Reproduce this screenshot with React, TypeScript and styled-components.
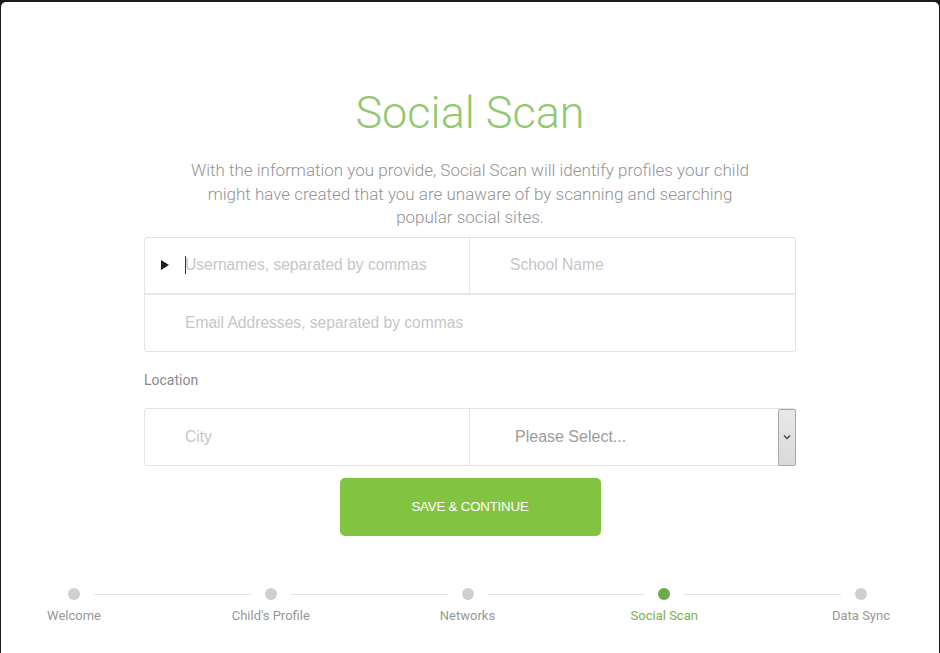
import React from "react";
import styled, { createGlobalStyle } from "styled-components";

const Global = createGlobalStyle`
  html, body { margin: 0; padding: 0; background: #1b1b1b; }
  body { font-family: Roboto, "Liberation Sans", sans-serif; }
  * { box-sizing: border-box; }
`;

const Card = styled.div`
  margin: 2px 1px 0 1px;
  height: 651px;
  background: #fff;
  border-radius: 5px 5px 0 0;
  display: flex;
  flex-direction: column;
  align-items: center;
  padding-top: 83px;
`;

const Title = styled.h1`
  margin: 0;
  font-family: Roboto, sans-serif;
  font-weight: 300;
  font-size: 45px;
  line-height: 56px;
  color: #92c870;
`;

const Intro = styled.p`
  margin: 18px 0 0;
  width: 580px;
  text-align: center;
  font-family: Roboto, sans-serif;
  font-weight: 300;
  font-size: 17px;
  line-height: 23.5px;
  color: #939393;
`;

const Form = styled.div`
  width: 652px;
  margin-top: 7px;
  display: flex;
  flex-direction: column;
`;

const Box = styled.div`
  border: 1px solid #e3e3e3;
  border-radius: 3px;
`;

const Row = styled.div<{ $split?: boolean; $last?: boolean }>`
  display: grid;
  grid-template-columns: ${(p) => (p.$split ? "325px 1fr" : "1fr")};
  height: ${(p) => (p.$last ? "56px" : "57px")};
  border-bottom: ${(p) => (p.$last ? "none" : "2px solid #e6e6e6")};
`;

const Cell = styled.div<{ $divider?: boolean; $pad?: number }>`
  display: flex;
  align-items: center;
  padding-left: ${(p) => p.$pad ?? 40}px;
  border-right: ${(p) => (p.$divider ? "1px solid #e6e6e6" : "none")};
`;

const Triangle = styled.span`
  width: 0;
  height: 0;
  border-top: 5px solid transparent;
  border-bottom: 5px solid transparent;
  border-left: 8px solid #1e1e1e;
  margin-right: 16px;
`;

const Caret = styled.span`
  width: 1px;
  height: 18px;
  background: #333;
  margin-right: -1px;
`;

const Input = styled.input`
  flex: 1;
  min-width: 0;
  border: none;
  outline: none;
  background: transparent;
  font-family: "Liberation Sans", Arial, sans-serif;
  font-size: 15.6px;
  color: #555;
  padding: 0;
  &::placeholder { color: #c6c6c6; }
`;

const Label = styled.div`
  margin: 18px 0 0;
  font-family: Roboto, sans-serif;
  font-size: 14px;
  line-height: 20px;
  color: #8a8a8a;
`;

const SecondBox = styled(Box)`
  margin-top: 18px;
`;

const SelectCell = styled.div`
  display: flex;
  align-items: stretch;
  padding-left: 45px;
`;

const Select = styled.select`
  flex: 1;
  appearance: none;
  -webkit-appearance: none;
  border: none;
  outline: none;
  background: transparent;
  font-family: "Liberation Sans", Arial, sans-serif;
  font-size: 16px;
  color: #9c9c9c;
  padding: 0;
`;

const ArrowBox = styled.div`
  width: 18px;
  margin: 0 -1px -1px 0;
  background: linear-gradient(#e8e8e8, #d9d9d9);
  border: 1px solid #a9a9a9;
  border-radius: 2px;
  display: flex;
  align-items: center;
  justify-content: center;
`;

const Button = styled.button`
  align-self: center;
  margin-top: 12px;
  width: 261px;
  height: 58px;
  border: none;
  border-radius: 5px;
  background: #82c441;
  color: #fff;
  font-family: "Liberation Sans", Arial, sans-serif;
  font-size: 13.3px;
  letter-spacing: -0.2px;
  cursor: pointer;
`;

const Stepper = styled.div`
  align-self: stretch;
  margin-top: 52px;
  padding: 0 72px 0 67px;
  display: flex;
  align-items: flex-start;
`;

const Step = styled.div`
  width: 12px;
  flex: none;
  display: flex;
  flex-direction: column;
  align-items: center;
`;

const Dot = styled.span<{ $active?: boolean }>`
  width: 12px;
  height: 12px;
  border-radius: 50%;
  background: ${(p) => (p.$active ? "#6ea94c" : "#cfcfcf")};
`;

const StepLabel = styled.span<{ $active?: boolean }>`
  margin-top: 8px;
  white-space: nowrap;
  font-family: Roboto, sans-serif;
  font-size: 13px;
  line-height: 16px;
  color: ${(p) => (p.$active ? "#78b24a" : "#979797")};
`;

const Connector = styled.span`
  flex: 1;
  height: 1px;
  margin: 6px 14px 0;
  background: #e2e2e2;
`;

const steps = ["Welcome", "Child's Profile", "Networks", "Social Scan", "Data Sync"];
const activeIndex = 3;

export default function App() {
  return (
    <>
      <Global />
      <Card>
        <Title>Social Scan</Title>
        <Intro>
          With the information you provide, Social Scan will identify profiles your child might
          have created that you are unaware of by scanning and searching popular social sites.
        </Intro>
        <Form>
          <Box>
            <Row $split>
              <Cell $divider $pad={16}>
                <Triangle />
                <Caret />
                <Input placeholder="Usernames, separated by commas" />
              </Cell>
              <Cell>
                <Input placeholder="School Name" />
              </Cell>
            </Row>
            <Row $last>
              <Cell>
                <Input placeholder="Email Addresses, separated by commas" />
              </Cell>
            </Row>
          </Box>
          <Label>Location</Label>
          <SecondBox>
            <Row $split $last>
              <Cell $divider>
                <Input placeholder="City" />
              </Cell>
              <SelectCell>
                <Select defaultValue="">
                  <option value="">Please Select...</option>
                </Select>
                <ArrowBox>
                  <svg width="8" height="6" viewBox="0 0 8 6">
                    <path d="M1 1.5 L4 4.5 L7 1.5" fill="none" stroke="#444" strokeWidth="1.3" />
                  </svg>
                </ArrowBox>
              </SelectCell>
            </Row>
          </SecondBox>
          <Button>SAVE &amp; CONTINUE</Button>
        </Form>
        <Stepper>
          {steps.map((s, i) => (
            <React.Fragment key={s}>
              {i > 0 && <Connector />}
              <Step>
                <Dot $active={i === activeIndex} />
                <StepLabel $active={i === activeIndex}>{s}</StepLabel>
              </Step>
            </React.Fragment>
          ))}
        </Stepper>
      </Card>
    </>
  );
}
